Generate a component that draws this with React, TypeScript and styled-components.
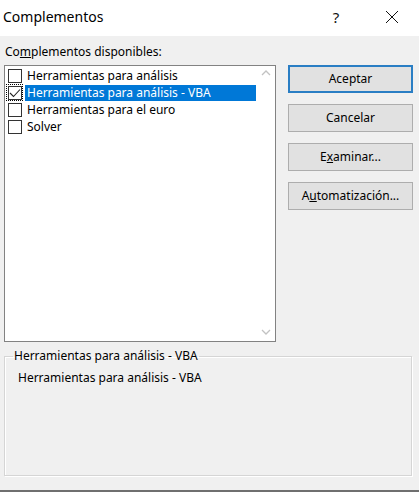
import React from 'react';
import styled, { createGlobalStyle } from 'styled-components';

const GlobalStyle = createGlobalStyle`
	html, body {
		margin: 0;
		padding: 0;
		background: #f0f0f0;
	}
	body {
		font-family: "Noto Sans", "Open Sans", "Liberation Sans", sans-serif;
		font-size: 12px;
		color: #000;
	}
`;

// Whole dialog window
const Dialog = styled.div`
	width: 419px;
	height: 492px;
	box-sizing: border-box;
	background: #f0f0f0;
	border-bottom: 2px solid #6f6f6f;
	display: flex;
	flex-direction: column;
`;

const TitleBar = styled.div`
	height: 36px;
	background: #ffffff;
	display: flex;
	align-items: center;
	padding: 0 4px 0 3px;
	flex-shrink: 0;
`;

const Title = styled.div`
	font-size: 14px;
	flex: 1;
	padding-bottom: 3px;
`;

const TitleButton = styled.div<{ gap?: number }>`
	width: 46px;
	height: 36px;
	margin-right: ${(p) => p.gap ?? 0}px;
	display: flex;
	align-items: center;
	justify-content: center;
	font-size: 15px;
	color: #111;
	padding-bottom: 3px;
	box-sizing: border-box;
`;

const Body = styled.div`
	flex: 1;
	padding: 8px 6px 0 4px;
	display: flex;
	flex-direction: column;
`;

const ListLabel = styled.div`
	height: 21px;
	padding-left: 1px;
	line-height: 16px;
	u {
		text-decoration: underline;
	}
`;

const MainRow = styled.div`
	display: flex;
	gap: 12px;
`;

const ListBox = styled.div`
	width: 272px;
	height: 277px;
	box-sizing: border-box;
	background: #ffffff;
	border: 1px solid #828282;
	display: flex;
	padding: 1px 0 0 1px;
`;

const Items = styled.div`
	flex: 1;
	display: flex;
	flex-direction: column;
`;

const ScrollBar = styled.div`
	width: 19px;
	display: flex;
	flex-direction: column;
	justify-content: space-between;
	align-items: center;
	padding: 3px 0 6px;
`;

const Row = styled.div`
	height: 17px;
	display: flex;
	align-items: center;
`;

const CheckWrap = styled.div<{ focused?: boolean }>`
	width: 17px;
	height: 17px;
	box-sizing: border-box;
	display: flex;
	align-items: center;
	justify-content: center;
	outline: ${(p) => (p.focused ? '1px dotted #000' : 'none')};
	outline-offset: -1px;
`;

const Box = styled.div`
	width: 14px;
	height: 14px;
	box-sizing: border-box;
	border: 1px solid #333;
	background: #fff;
	display: flex;
	align-items: center;
	justify-content: center;
`;

const ItemText = styled.div<{ selected?: boolean }>`
	flex: 1;
	height: 16px;
	line-height: 15px;
	padding-left: 2px;
	margin-left: 2px;
	background: ${(p) => (p.selected ? '#0078d7' : 'transparent')};
	color: ${(p) => (p.selected ? '#ffffff' : '#000')};
	white-space: nowrap;
`;

const Buttons = styled.div`
	display: flex;
	flex-direction: column;
	gap: 11px;
`;

const Button = styled.div<{ primary?: boolean }>`
	width: 125px;
	height: 28px;
	box-sizing: border-box;
	background: #e1e1e1;
	border: ${(p) => (p.primary ? '2px solid #2a7ec4' : '1px solid #adadad')};
	display: flex;
	align-items: center;
	justify-content: center;
	padding-bottom: 2px;
	u {
		text-decoration: underline;
	}
`;

const GroupBox = styled.fieldset`
	margin: 7px 1px 0 0;
	height: 127px;
	box-sizing: border-box;
	border: 1px solid #d5d5d5;
	box-shadow: inset 1px 1px 0 #ffffff, 1px 1px 0 #ffffff;
	padding: 7px 13px;
	legend {
		padding: 0 1px;
		margin-left: -5px;
		line-height: 14px;
	}
`;

const Description = styled.div`
	line-height: 16px;
`;

const Chevron: React.FC<{ down?: boolean }> = ({ down }) => (
	<svg width="10" height="6" viewBox="0 0 10 6">
		<path d={down ? 'M1 1 L5 5 L9 1' : 'M1 5 L5 1 L9 5'} fill="none" stroke="#c2c2c2" strokeWidth="1.3" />
	</svg>
);

const items = [
	{ label: 'Herramientas para análisis', checked: false },
	{ label: 'Herramientas para análisis - VBA', checked: true, selected: true },
	{ label: 'Herramientas para el euro', checked: false },
	{ label: 'Solver', checked: false },
];

export default function App() {
	return (
		<>
			<GlobalStyle />
			<Dialog>
				<TitleBar>
					<Title>Complementos</Title>
					<TitleButton gap={10}>?</TitleButton>
					<TitleButton>
						<svg width="14" height="14" viewBox="0 0 14 14">
							<path d="M1 1 L13 13 M13 1 L1 13" stroke="#111" strokeWidth="1" />
						</svg>
					</TitleButton>
				</TitleBar>
				<Body>
					<ListLabel>
						Co<u>m</u>plementos disponibles:
					</ListLabel>
					<MainRow>
						<ListBox>
							<Items>
								{items.map((it) => (
									<Row key={it.label}>
										<CheckWrap focused={it.selected}>
											<Box>
												{it.checked && (
													<svg width="12" height="10" viewBox="0 0 12 10">
														<path d="M1 5 L4.5 8.5 L11 1.5" fill="none" stroke="#222" strokeWidth="1.1" />
													</svg>
												)}
											</Box>
										</CheckWrap>
										<ItemText selected={it.selected}>{it.label}</ItemText>
									</Row>
								))}
							</Items>
							<ScrollBar>
								<Chevron />
								<Chevron down />
							</ScrollBar>
						</ListBox>
						<Buttons>
							<Button primary>Aceptar</Button>
							<Button>Cancelar</Button>
							<Button>
								<span>
									E<u>x</u>aminar...
								</span>
							</Button>
							<Button>
								<span>
									A<u>u</u>tomatización...
								</span>
							</Button>
						</Buttons>
					</MainRow>
					<GroupBox>
						<legend>Herramientas para análisis - VBA</legend>
						<Description>Herramientas para análisis - VBA</Description>
					</GroupBox>
				</Body>
			</Dialog>
		</>
	);
}
